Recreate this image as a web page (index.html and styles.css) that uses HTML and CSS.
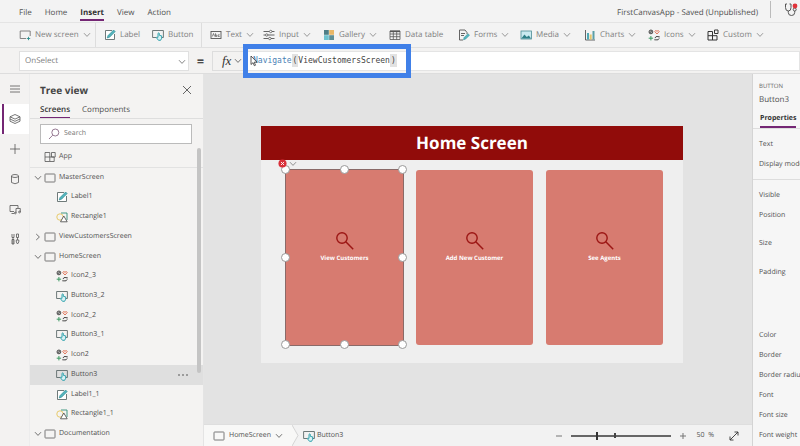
FILE: index.html
```html
<!DOCTYPE html>
<html lang="en">
<head>
<meta charset="utf-8">
<meta name="viewport" content="width=device-width, initial-scale=1">
<title>FirstCanvasApp</title>
<link rel="stylesheet" href="styles.css">
</head>
<body>
<svg class="sprite" aria-hidden="true">
  <symbol id="chev" viewBox="0 0 8 6"><path d="M1 1.2 4 4.4 7 1.2" fill="none" stroke="currentColor" stroke-width=".8"/></symbol>
  <symbol id="screen" viewBox="0 0 12 12"><rect x="1" y="2" width="10" height="8" rx=".6" fill="none" stroke="#6b6b6b" stroke-width=".9"/></symbol>
  <symbol id="newscreen" viewBox="0 0 12 12"><path d="M7 9.5H1.2V2h10v5" fill="none" stroke="#777" stroke-width=".9"/><path d="M7.800 9.500h3.400M9.500 7.800v3.400" stroke="#2a8f8f" stroke-width=".9"/></symbol>
  <symbol id="label" viewBox="0 0 12 12"><path d="M10.500 5v5.500h-9v-9H8" fill="#fff" stroke="#5f6b6b" stroke-width=".9"/><path d="M3.200 9 4 6.600 9.600 1l1.600 1.600L5.600 8.200Z" fill="#55b4bd" stroke="#27888f" stroke-width=".6"/></symbol>
  <symbol id="button" viewBox="0 0 12 12"><path d="M4.500 8.500H.6V1.500h10.800v7H9.500" fill="none" stroke="#5f6b6b" stroke-width=".9"/><path d="M6 8V4.300q.7-.8 1.300 0V6.300l2.400.6v2.300L8.600 11.300H6.500L4.300 8.600q.4-1 1.700-.2Z" fill="#d9f1f4" stroke="#1f9ba6" stroke-width=".9"/></symbol>
  <symbol id="rect" viewBox="0 0 12 12"><circle cx="4" cy="6" r="3.200" fill="none" stroke="#e5c55c" stroke-width=".9"/><path d="M5 2h6v7" fill="none" stroke="#2f8f77" stroke-width=".9"/><path d="M4.500 10.800 7.800 5 11.200 10.800Z" fill="#fff" stroke="#555" stroke-width=".9"/></symbol>
  <symbol id="icons" viewBox="0 0 12 12"><circle cx="2.900" cy="2.900" r="1.900" fill="#aaa" stroke="#444" stroke-width=".9"/><path d="m1.700 4.100 2.400-2.400" stroke="#444" stroke-width=".7"/><path d="M9 5 6.800 2.600q.4-1.800 2.200-.4 1.800-1.400 2.200.4Z" fill="none" stroke="#e0694a" stroke-width=".9"/><path d="M2.900 7v4.400M.7 9.200h4.400" stroke="#3d9a63" stroke-width="1"/><path d="M7 9q.2-2 3.600-1.500M11 7v1.600M11.200 9.400q-.4 2-3.600 1.500M7 11.400V9.900" fill="none" stroke="#333" stroke-width=".9"/></symbol>
  <symbol id="text" viewBox="0 0 12 12"><rect x="1" y="2.500" width="10" height="7" fill="none" stroke="#555" stroke-width=".9"/><path d="M2.300 7.500 3.500 4.500l1.200 3M5.500 4.300v3.200h1.300V6H5.500M9.700 5.800H8.200v1.700h1.500" fill="none" stroke="#555" stroke-width=".7"/></symbol>
  <symbol id="input" viewBox="0 0 12 12"><path d="M.5 2.500h6M9 2.500h2.500M.5 6h2M5 6h6.500M.5 9.500h5M8 9.500h3.500" stroke="#555" stroke-width=".9"/><g fill="#fff" stroke="#555" stroke-width=".8"><circle cx="7.700" cy="2.500" r="1.200"/><circle cx="3.700" cy="6" r="1.200"/><circle cx="6.800" cy="9.500" r="1.200"/></g></symbol>
  <symbol id="gallery" viewBox="0 0 12 12"><path d="M1 1h4.800v4.800H1Z" fill="#4f7f86"/><path d="M6.200 1H11v4.800H6.200Z" fill="#e9b766"/><path d="M1 6.200h4.800V11H1Z" fill="#6ec3cf"/><path d="M6.200 6.200H11V11H6.200Z" fill="#5e8f95"/></symbol>
  <symbol id="table" viewBox="0 0 12 12"><path d="M1 2h10v8.500H1ZM1 5h10M1 7.700h10M4.300 2v8.500M7.700 2v8.500" fill="none" stroke="#555" stroke-width=".8"/><path d="M1 1.600h10v1.500H1Z" fill="#555"/></symbol>
  <symbol id="forms" viewBox="0 0 12 12"><path d="M9 5V3.500L7 1H1.500v10H5M3 4.500h4M3 6.500h3" fill="none" stroke="#555" stroke-width=".9"/><path d="m5.500 10.800.6-2.200L10 4.700l1.500 1.500-3.900 3.900Z" fill="#58b6c1" stroke="#27888f" stroke-width=".5"/></symbol>
  <symbol id="media" viewBox="0 0 12 12"><rect x="1" y="2" width="10.500" height="8" fill="#c9eaf0" stroke="#4c8c94" stroke-width=".8"/><path d="m1.400 9.600 3-4 2.400 2.500 2-1.600 2.300 3.100Z" fill="#2d7f87"/></symbol>
  <symbol id="charts" viewBox="0 0 12 12"><path d="M1.500 1v10H11" fill="none" stroke="#555" stroke-width=".9"/><path d="M3 4h2v6.500H3Z" fill="#4fa9b5"/><path d="M5.700 5.500h2v5h-2Z" fill="#e5c56b"/><path d="M8.500 2h2v8.500h-2Z" fill="#5b9fa6"/></symbol>
  <symbol id="custom" viewBox="0 0 12 12"><path d="M1 2.500h4.500V11M1 2.500V11h9V6.700H1M7.500 1h3.500v3.500H7.500Z" fill="none" stroke="#333" stroke-width="1"/></symbol>
  <symbol id="app" viewBox="0 0 12 12"><path d="M1 1.500h4.800v9H1ZM1 6h9.200v4.500H5.800M7.500 1.500h3.700V6H7.500Z" fill="none" stroke="#555" stroke-width=".8"/></symbol>
  <symbol id="lens" viewBox="0 0 18 18"><circle cx="6" cy="6" r="5.200" fill="none" stroke="currentColor" stroke-width="1.400"/><path d="m9.800 9.800 7.400 7.400" stroke="currentColor" stroke-width="1.500"/></symbol>
</svg>

<div class="shell">
  <header class="top">
    <nav class="tabs">
      <a href="#">File</a><a href="#">Home</a><a href="#" class="on">Insert</a><a href="#">View</a><a href="#">Action</a>
    </nav>
    <span class="status">FirstCanvasApp - Saved (Unpublished)</span>
    <button class="checker" aria-label="App checker"><svg viewBox="0 0 14 16"><path d="M3 2H1.500v3.500q0 3.500 2.800 3.500T7 5.500V2H5.500M4.300 9v1.500q0 3 3.200 3t3.200-3V9" fill="none" stroke="#555" stroke-width="1"/><circle cx="10.700" cy="7.500" r="1.500" fill="none" stroke="#555"/><circle cx="11" cy="4" r="2.400" fill="#e0333a"/></svg></button>
  </header>

  <div class="tools">
    <button><svg><use href="#newscreen"/></svg>New screen<svg class="cv"><use href="#chev"/></svg></button>
    <button class="first"><svg><use href="#label"/></svg>Label</button>
    <button><svg><use href="#button"/></svg>Button</button>
    <button class="first"><svg><use href="#text"/></svg>Text<svg class="cv"><use href="#chev"/></svg></button>
    <button><svg><use href="#input"/></svg>Input<svg class="cv"><use href="#chev"/></svg></button>
    <button><svg><use href="#gallery"/></svg>Gallery<svg class="cv"><use href="#chev"/></svg></button>
    <button><svg><use href="#table"/></svg>Data table</button>
    <button><svg><use href="#forms"/></svg>Forms<svg class="cv"><use href="#chev"/></svg></button>
    <button><svg><use href="#media"/></svg>Media<svg class="cv"><use href="#chev"/></svg></button>
    <button><svg><use href="#charts"/></svg>Charts<svg class="cv"><use href="#chev"/></svg></button>
    <button><svg><use href="#icons"/></svg>Icons<svg class="cv"><use href="#chev"/></svg></button>
    <button><svg><use href="#custom"/></svg>Custom<svg class="cv"><use href="#chev"/></svg></button>
  </div>

  <div class="formula">
    <div class="prop">
      <select aria-label="Property"><option>OnSelect</option></select>
      <svg class="cv"><use href="#chev"/></svg>
    </div>
    <span class="eq">=</span>
    <button class="fx" aria-label="Functions"><i>fx</i><svg class="cv"><use href="#chev"/></svg></button>
    <div class="code" role="textbox" aria-label="Formula" contenteditable="true" spellcheck="false"><span class="fn">Navigate</span><span class="par">(</span>ViewCustomersScreen<span class="par">)</span></div>
    <div class="frame"></div>
    <svg class="pointer" viewBox="0 0 8 12"><path d="M1 1v8.500l2-1.800 1.300 3 1.200-.5-1.300-3H7Z" fill="#fff" stroke="#333" stroke-width=".8"/></svg>
  </div>

  <div class="work">
    <nav class="rail">
      <button aria-label="Menu"><svg viewBox="0 0 12 12"><path d="M1 3h10M1 6h10M1 9h10"/></svg></button>
      <button class="on" aria-label="Tree view"><svg viewBox="0 0 12 12"><path d="m6 1.500 5 2.300-5 2.300-5-2.300ZM1 6l5 2.300L11 6M1 8.200l5 2.300 5-2.300M1 3.800v4.400M11 3.800v4.400"/></svg></button>
      <button aria-label="Insert"><svg viewBox="0 0 12 12"><path d="M1 6h10M6 1v10"/></svg></button>
      <button aria-label="Data"><svg viewBox="0 0 12 12"><path d="M2.500 3v6.500q3.500 2.500 7 0V3"/><ellipse cx="6" cy="3" rx="3.500" ry="1.500"/></svg></button>
      <button aria-label="Media"><svg viewBox="0 0 12 12"><path d="M5 8.500H1v-6h8V5M2.500 10.500H5M7 10V5.500h4.300V9"/><circle cx="6.300" cy="10" r=".9"/><circle cx="10.500" cy="9" r=".9"/></svg></button>
      <button aria-label="Advanced tools"><svg viewBox="0 0 12 12"><path d="M3 1v3.500h2V1M4 4.500V11M3 6.500h2V11H3ZM7.500 1h2v3.500h-2ZM8.500 4.500V7M7.300 7h2.500v2L8.500 11l-1.200-2Z"/></svg></button>
    </nav>

    <aside class="tree">
      <div class="treehead"><h2>Tree view</h2><button aria-label="Close"><svg viewBox="0 0 10 10"><path d="m1 1 8 8M9 1 1 9" stroke="#555" stroke-width=".9"/></svg></button></div>
      <div class="treetabs"><a href="#" class="on">Screens</a><a href="#">Components</a></div>
      <label class="search"><svg viewBox="0 0 12 12"><circle cx="7.300" cy="4.500" r="3.500" fill="none" stroke="#8a6a86" stroke-width=".9"/><path d="M4.700 7.200 1 11" stroke="#8a6a86" stroke-width=".9"/></svg><input type="search" placeholder="Search" aria-label="Search"></label>
      <ul class="nodes">
        <li class="app"><svg><use href="#app"/></svg>App</li>
        <li><svg class="cv"><use href="#chev"/></svg><svg><use href="#screen"/></svg>MasterScreen</li>
        <li class="sub"><svg><use href="#label"/></svg>Label1</li>
        <li class="sub"><svg><use href="#rect"/></svg>Rectangle1</li>
        <li><svg class="cv shut"><use href="#chev"/></svg><svg><use href="#screen"/></svg>ViewCustomersScreen</li>
        <li><svg class="cv"><use href="#chev"/></svg><svg><use href="#screen"/></svg>HomeScreen</li>
        <li class="sub"><svg><use href="#icons"/></svg>Icon2_3</li>
        <li class="sub"><svg><use href="#button"/></svg>Button3_2</li>
        <li class="sub"><svg><use href="#icons"/></svg>Icon2_2</li>
        <li class="sub"><svg><use href="#button"/></svg>Button3_1</li>
        <li class="sub"><svg><use href="#icons"/></svg>Icon2</li>
        <li class="sub sel"><svg><use href="#button"/></svg>Button3<button class="more" aria-label="More"><svg viewBox="0 0 12 4"><circle cx="2" cy="2" r=".8"/><circle cx="6" cy="2" r=".8"/><circle cx="10" cy="2" r=".8"/></svg></button></li>
        <li class="sub"><svg><use href="#label"/></svg>Label1_1</li>
        <li class="sub"><svg><use href="#rect"/></svg>Rectangle1_1</li>
        <li><svg class="cv"><use href="#chev"/></svg><svg><use href="#screen"/></svg>Documentation</li>
      </ul>
      <div class="thumb"></div>
    </aside>

    <main class="stage">
      <div class="canvas">
        <div class="page">
          <h1>Home Screen</h1>
          <div class="cards">
            <button class="card picked"><svg><use href="#lens"/></svg>View Customers
              <span class="h nw"></span><span class="h n"></span><span class="h ne"></span><span class="h w"></span><span class="h e"></span><span class="h sw"></span><span class="h s"></span><span class="h se"></span>
              <span class="err"><svg viewBox="0 0 10 10"><circle cx="5" cy="5" r="4.500" fill="#d9303a"/><path d="m3.300 3.300 3.400 3.400M6.700 3.300 3.300 6.700" stroke="#fff"/></svg><svg class="cv"><use href="#chev"/></svg></span>
            </button>
            <button class="card"><svg><use href="#lens"/></svg>Add New Customer</button>
            <button class="card"><svg><use href="#lens"/></svg>See Agents</button>
          </div>
        </div>
      </div>
      <footer class="foot">
        <button class="crumb"><svg><use href="#screen"/></svg>HomeScreen<svg class="cv"><use href="#chev"/></svg></button>
        <svg class="arrow" viewBox="0 0 8 22" preserveAspectRatio="none"><path d="M0 0 6 11 0 22Z" fill="#f8f8f7"/><path d="M0 0 6 11 0 22" fill="none" stroke="#d4d4d4"/></svg>
        <button class="crumb2"><svg><use href="#button"/></svg>Button3</button>
        <div class="zoom">
          <button aria-label="Zoom out"><svg viewBox="0 0 8 8"><path d="M1 4h6" stroke="#777"/></svg></button>
          <input type="range" min="0" max="100" value="26" aria-label="Zoom">
          <button aria-label="Zoom in"><svg viewBox="0 0 8 8"><path d="M1 4h6M4 1v6" stroke="#777"/></svg></button>
          <span class="pct">50&nbsp; %</span>
          <button class="fit" aria-label="Fit to window"><svg viewBox="0 0 10 10"><path d="m1 9 8-8M5.500 1H9v3.500M1 5.500V9h3.500" fill="none" stroke="#333" stroke-width=".9"/></svg></button>
        </div>
      </footer>
    </main>

    <aside class="props">
      <small>BUTTON</small>
      <h3>Button3</h3>
      <div class="ptabs"><a href="#">Properties</a></div>
      <ul class="group"><li>Text</li><li>Display mode</li></ul>
      <ul class="group"><li>Visible</li><li>Position</li><li class="tall">Size</li><li class="tall">Padding</li></ul>
      <ul class="group last"><li>Color</li><li>Border</li><li>Border radius</li><li>Font</li><li>Font size</li><li>Font weight</li></ul>
    </aside>
  </div>
</div>
</body>
</html>
```
FILE: styles.css
```css
* { box-sizing: border-box; }
body {
  margin: 0;
  font: 8px/12px "Open Sans", "Noto Sans", sans-serif;
  text-rendering: geometricPrecision;
  color: #505050;
  background: #f3f2f1;
}
button, input, select { font: inherit; color: inherit; border: 0; background: none; padding: 0; margin: 0; text-rendering: inherit; }
button { display: flex; align-items: center; white-space: nowrap; }
a { color: inherit; text-decoration: none; }
ul { list-style: none; margin: 0; padding: 0; }
h1, h2, h3 { margin: 0; }
svg { width: 12px; height: 12px; flex: none; display: block; }
svg.cv { width: 8px; height: 6px; }
.sprite { position: absolute; width: 0; height: 0; }

.shell { height: 100vh; display: flex; flex-direction: column; overflow: hidden; }

.top { height: 23px; flex: none; display: flex; align-items: flex-end; padding: 0 2px 0 19px; border-bottom: 1px solid #e4e4e4; background: #f3f3f3; }
.tabs { display: flex; gap: 13px; }
.tabs a { height: 14px; border-bottom: 2px solid transparent; margin-bottom: 1px; }
.tabs .on { font-weight: 700; color: #333; border-color: #742774; }
.status { margin-left: auto; padding-bottom: 3px; }
.checker { margin-left: 12px; padding: 0 0 0 13px; height: 17px; border-left: 1px solid #bbb; margin-bottom: 4px; }
.checker svg { width: 14px; height: 16px; }

.tools { height: 25px; flex: none; display: grid; grid-template-columns: 76px 57px 49px 62px 60px 66px 69px 62px 64px 64px 59px auto; padding-left: 19px; border-bottom: 1px solid #e0e0e0; background: #f3f3f3; color: #808080; }
.tools button { gap: 4px; }
.tools .first { border-left: 1px solid #ddd; padding-left: 8px; }

.formula { height: 26px; flex: none; display: flex; align-items: center; padding-left: 19px; position: relative; border-bottom: 1px solid #ddd; }
.prop { width: 170px; height: 20px; position: relative; background: #fff; border: 1px solid #e0e0e0; }
.prop select { appearance: none; width: 100%; height: 100%; padding-left: 5px; color: #808080; }
.prop .cv { position: absolute; right: 2px; top: 7px; color: #666; pointer-events: none; }
.eq { width: 23px; text-align: center; font-size: 13px; color: #222; font-weight: 600; }
.fx { width: 34px; height: 20px; border: 1px solid #ddd; padding-left: 9px; gap: 3px; }
.fx i { font: italic 13px/16px "Liberation Serif", serif; color: #333; }
.code { flex: 1; height: 20px; margin-left: 1px; padding-left: 5px; background: #fff; border: 1px solid #e4e4e4; font: 8px/18px "DejaVu Sans Mono", monospace; text-rendering: auto; color: #444; white-space: nowrap; }
.fn { color: #4a7fb5; }
.par { background: #e2e2e2; padding: 2px 1px; }
.frame { position: absolute; left: 243px; top: -4px; width: 168px; height: 34px; border: 5px solid #4080e8; z-index: 3; pointer-events: none; }
.pointer { position: absolute; left: 250px; top: 7px; width: 8px; height: 12px; z-index: 4; }

.work { flex: 1; min-height: 0; display: flex; }
.rail { width: 30px; flex: none; border-right: 1px solid #ececec; background: #f3f2f1; }
.rail button { width: 100%; height: 30px; justify-content: center; }
.rail .on { background: #fff; box-shadow: inset 2px 0 #fff, inset 4px 0 #742774; }
.rail path, .rail ellipse, .rail circle { fill: none; stroke: #555; stroke-width: .8; }

.tree { width: 174px; flex: none; display: flex; flex-direction: column; padding-bottom: 2px; position: relative; background: #f4f3f2; border-right: 1px solid #e4e4e4; font-size: 7px; }
.treehead { display: flex; justify-content: space-between; align-items: center; padding: 8px 11px 0 10px; }
.treehead h2 { font-size: 10px; line-height: 16px; font-weight: 700; color: #444; }
.treehead svg { width: 10px; height: 10px; }
.treetabs { display: flex; gap: 12px; padding: 6px 10px 0; font-size: 8px; border-bottom: 1px solid #dedede; }
.treetabs a { height: 14px; }
.treetabs .on { font-weight: 600; color: #333; border-bottom: 1px solid #742774; }
.search { display: flex; align-items: center; gap: 4px; height: 20px; margin: 5px 11px 4px 10px; padding-left: 7px; background: #fff; border: 1px solid #bbb; }
.search input { flex: 1; min-width: 0; outline: 0; appearance: none; }
.search input::placeholder { color: #777; opacity: 1; }
.nodes { flex: 1; min-height: 0; display: grid; grid-auto-rows: minmax(0, 1fr); }
.nodes li { display: flex; align-items: center; padding-left: 4px; }
.nodes .cv { margin-right: 2px; }
.nodes li > svg:not(.cv) { margin-right: 3px; }
.nodes .app { padding-left: 14px; border-bottom: 1px solid #e2e2e2; }
.nodes .sub { padding-left: 26px; }
.nodes .sel { background: #dfdfdf; }
.shut { transform: rotate(-90deg); }
.more { margin-left: auto; margin-right: 14px; }
.more svg { width: 12px; height: 4px; fill: #444; }
.thumb { position: absolute; right: 2px; top: 74px; bottom: 73px; width: 4px; border-radius: 2px; background: #c4c4c4; }

.stage { flex: 1; min-width: 0; display: flex; flex-direction: column; }
.canvas { flex: 1; min-height: 0; display: flex; padding: 52px 69px 61px 57px; background: #e3e3e3; }
.page { flex: 1; display: flex; flex-direction: column; background: #efefef; }
.page h1 { height: 34px; background: #910c0a; color: #fff; font-size: 17px; line-height: 34px; font-weight: 700; text-align: center; }
.cards { flex: 1; display: grid; grid-template-columns: repeat(3, 1fr); gap: 13px; padding: 10px 20px 18px 25px; }
.card { position: relative; flex-direction: column; justify-content: center; gap: 2px; padding-bottom: 20px; border-radius: 3px; background: #d77b70; color: #fff; font-size: 6px; font-weight: 700; }
.card > svg { width: 18px; height: 18px; color: #9c1614; }
.picked { outline: 1px solid #8a6a68; border-radius: 0; }
.h { position: absolute; width: 9px; height: 9px; margin: -5px; border-radius: 50%; background: #fff; border: 1px solid #999; }
.nw, .w, .sw { left: 0; }
.n, .s { left: 50%; }
.ne, .e, .se { left: 100%; }
.nw, .n, .ne { top: 0; }
.w, .e { top: 50%; }
.sw, .s, .se { top: 100%; }
.err { position: absolute; left: -8px; top: -11px; display: flex; align-items: center; gap: 2px; color: #777; }
.err svg:first-child { width: 9px; height: 9px; }

.foot { height: 22px; flex: none; display: flex; background: #f2f2f2; border-top: 1px solid #dedede; font-size: 7px; }
.crumb { width: 88px; padding-left: 9px; gap: 4px; background: #f8f8f7; }
.arrow { width: 8px; height: 100%; }
.crumb2 { gap: 2px; padding-left: 3px; }
.zoom { margin-left: auto; display: flex; align-items: center; gap: 8px; padding-right: 13px; }
.zoom svg { width: 8px; height: 8px; }
.zoom .pct { margin-left: 2px; }
.zoom .fit { margin-left: 7px; }
.zoom .fit svg { width: 10px; height: 10px; }
.zoom input { appearance: none; width: 100px; height: 10px; background: linear-gradient(#444, #444) 43px 50% / 2px 5px no-repeat, linear-gradient(#666, #666) 0 50% / 100% 2px no-repeat; }
.zoom input::-webkit-slider-thumb { appearance: none; width: 2px; height: 8px; background: #333; }

.props { width: 48px; flex: none; padding: 6px 0 0 6px; overflow: hidden; white-space: nowrap; background: #f6f6f6; border-left: 1px solid #d4d4d4; font-size: 7px; }
.props small { display: block; font-size: 6px; line-height: 12px; color: #666; }
.props h3 { font-size: 8px; line-height: 16px; font-weight: 400; }
.ptabs { margin: 4px 0 0 -6px; padding-left: 7px; border-bottom: 1px solid #ddd; height: 17px; }
.ptabs a { display: inline-block; height: 16px; line-height: 14px; font-weight: 700; color: #333; border-bottom: 2px solid #742774; }
.group { margin-left: -6px; padding: 6px 0 4px 6px; border-bottom: 1px solid #ddd; }
.group li { height: 20px; line-height: 20px; }
.group + .group { border: 0; padding-bottom: 0; }
.group .tall { height: 29px; line-height: 36px; }
.group.last { padding-top: 42px; }
```
